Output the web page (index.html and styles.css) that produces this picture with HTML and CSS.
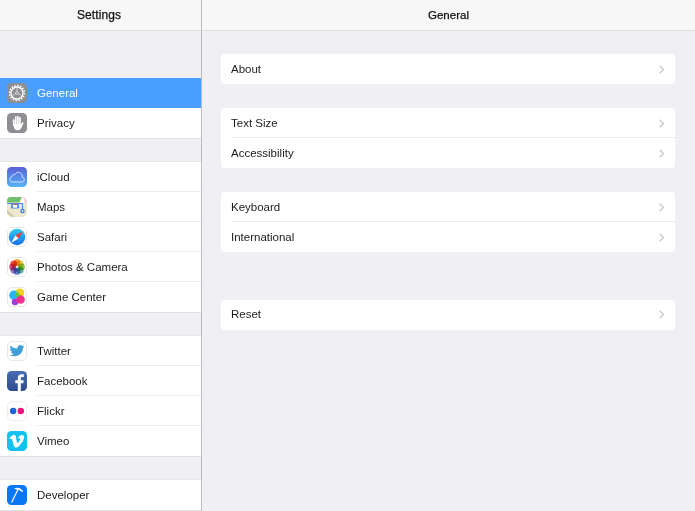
FILE: index.html
```html
<!DOCTYPE html>
<html lang="en">
<head>
<meta charset="utf-8">
<title>Settings</title>
<link rel="stylesheet" href="styles.css">
</head>
<body>
<div class="app">
  <aside class="sidebar">
    <header class="bar bar-side"><h1 class="bar-title">Settings</h1></header>
    <div class="side-list">
      <ul class="group">
        <li class="row selected">
          <svg class="icon" viewBox="0 0 20 20"><rect width="20" height="20" rx="4.5" fill="#8e8e93"/><g fill="none" stroke="#fff"><circle cx="10" cy="10" r="7.4" stroke-width="1.6" stroke-dasharray="1.5 1.4"/><circle cx="10" cy="10" r="6" stroke-width="1.3"/><path d="M10 8.500V5M8.700 10.700l-3 1.800M11.300 10.700l3 1.800" stroke-width=".6"/><circle cx="10" cy="10" r="1.400" stroke-width=".6"/></g></svg>
          <span class="label">General</span>
        </li>
        <li class="row">
          <svg class="icon" viewBox="0 0 20 20"><rect width="20" height="20" rx="4.5" fill="#8e8e93"/><path fill="none" stroke="#fff" stroke-width="1.700" stroke-linecap="round" d="M6.700 7v5M8.800 4v7M10.900 3.500V11M13 4.800V11.500"/><path fill="#fff" d="M5.850 11h8v.5l1.300-2c.6-.8 1.700-.2 1.300.7l-1.900 4.300c-.7 1.600-1.900 2.700-3.700 2.700-2.500 0-4-1.400-4-3.800z"/></svg>
          <span class="label">Privacy</span>
        </li>
      </ul>
      <ul class="group">
        <li class="row">
          <svg class="icon" viewBox="0 0 20 20"><defs><linearGradient id="cloudbg" x1="0" y1="0" x2="0" y2="1"><stop offset="0" stop-color="#5a5fd8"/><stop offset="1" stop-color="#55b4f8"/></linearGradient></defs><rect width="20" height="20" rx="4.5" fill="url(#cloudbg)"/><path fill="none" stroke="#e4eefc" stroke-width=".9" d="M5.500 15C2.500 15 1.800 11 4.500 10 4.500 8 6.500 7.200 7.800 8 8.800 5.500 11.500 4.500 13.500 6 15 7 15.500 8.500 15 10 18 10.500 18 15 15 15z"/></svg>
          <span class="label">iCloud</span><span class="sep"></span>
        </li>
        <li class="row">
          <svg class="icon" viewBox="0 0 20 20"><rect width="20" height="20" rx="4.500" fill="#efe8cf"/><path fill="#6fc26b" d="M4 0h11L12 5.500H0V4a4 4 0 0 1 4-4z"/><path fill="#fff" d="M15 0h1a4 4 0 0 1 4 4v2h-6z"/><path fill="#f6c8d0" d="M16 0l1 .2L20 4v2h-2z"/><path fill="#cdc9a8" d="M0 13l8 7H5l-5-4z"/><path fill="none" stroke="#3d92ef" stroke-width="1.100" d="M0 6.500h15.500v8"/><rect x="4" y="6" width="8" height="5.500" rx="1" fill="#4c8ee8"/><path d="M5.500 8h5l-.7 2.800H6.200z" fill="#fff"/><path d="M5 7h6" stroke="#e8574f" stroke-width=".9"/><circle cx="15.500" cy="14" r="2.200" fill="#2a7be8"/><circle cx="15.500" cy="14" r=".9" fill="#fff"/></svg>
          <span class="label">Maps</span><span class="sep"></span>
        </li>
        <li class="row">
          <svg class="icon" viewBox="0 0 20 20"><defs><linearGradient id="safaribg" x1="0" y1="0" x2="0" y2="1"><stop offset="0" stop-color="#2ecbf5"/><stop offset="1" stop-color="#1a6fe8"/></linearGradient></defs><rect x=".5" y=".5" width="19" height="19" rx="4.500" fill="#fff" stroke="#e8e8ea"/><circle cx="10" cy="10" r="8.300" fill="url(#safaribg)"/><path fill="#f23b30" d="M15.800 4.200L8.500 8.500l3 3z"/><path fill="#fff" d="M4.200 15.800l7.300-4.300-3-3z"/></svg>
          <span class="label">Safari</span><span class="sep"></span>
        </li>
        <li class="row">
          <svg class="icon" viewBox="0 0 20 20"><rect x=".5" y=".5" width="19" height="19" rx="4.500" fill="#fff" stroke="#e8e8ea"/><circle class="petal" cx="10" cy="5.500" r="3.400" fill="#f4a53a"/><circle class="petal" cx="13.200" cy="6.800" r="3.400" fill="#e8d33f"/><circle class="petal" cx="14.500" cy="10" r="3.400" fill="#93c84d"/><circle class="petal" cx="13.200" cy="13.200" r="3.400" fill="#5cb6a8"/><circle class="petal" cx="10" cy="14.500" r="3.400" fill="#6f8fd6"/><circle class="petal" cx="6.800" cy="13.200" r="3.400" fill="#9a7fc8"/><circle class="petal" cx="5.500" cy="10" r="3.400" fill="#d95f8f"/><circle class="petal" cx="6.800" cy="6.800" r="3.400" fill="#ea5048"/></svg>
          <span class="label">Photos &amp; Camera</span><span class="sep"></span>
        </li>
        <li class="row">
          <svg class="icon" viewBox="0 0 20 20"><rect x=".5" y=".5" width="19" height="19" rx="4.500" fill="#fff" stroke="#e8e8ea"/><circle cx="12.800" cy="6" r="4.500" fill="#f6d21f"/><circle cx="6.800" cy="8.200" r="4.600" fill="#29b6f6"/><circle cx="8" cy="15" r="3.300" fill="#9a3fd8"/><circle cx="13.500" cy="12.500" r="4.300" fill="#f2318f"/><path d="M9.800 4.500l3.400 3.600-2.500 2.400-2.200-2z" fill="#5cc83c"/></svg>
          <span class="label">Game Center</span>
        </li>
      </ul>
      <ul class="group">
        <li class="row">
          <svg class="icon" viewBox="0 0 20 20"><rect x=".5" y=".5" width="19" height="19" rx="4.500" fill="#fff" stroke="#e8e8ea"/><path fill="#3f9fd8" d="M17.500 5.400c-.5.200-1 .4-1.600.5.600-.4 1-.9 1.200-1.600-.5.300-1.100.6-1.800.7a2.900 2.900 0 0 0-4.900 2.600C7.600 7.400 5 6.300 3.500 4.500c-.8 1.300-.4 3 .9 3.900-.5 0-.9-.1-1.300-.4 0 1.400 1 2.600 2.300 2.900-.4.100-.9.100-1.300 0 .4 1.200 1.400 2 2.700 2a5.800 5.800 0 0 1-4.300 1.200c4 2.600 13 1.300 13.500-7.100.5-.5 1-1 1.500-1.600z"/></svg>
          <span class="label">Twitter</span><span class="sep"></span>
        </li>
        <li class="row">
          <svg class="icon" viewBox="0 0 20 20"><defs><linearGradient id="fbbg" x1="0" y1="0" x2="0" y2="1"><stop offset="0" stop-color="#4a6db5"/><stop offset="1" stop-color="#2f4a8c"/></linearGradient></defs><rect width="20" height="20" rx="4.500" fill="url(#fbbg)"/><path fill="#fff" d="M13.800 20v-7.700h2.500l.4-3h-2.900V7.500c0-.9.300-1.500 1.500-1.500h1.500V3.300c-.3 0-1.200-.1-2.200-.1-2.300 0-3.800 1.400-3.800 3.900v2.200H8.300v3h2.500V20z"/></svg>
          <span class="label">Facebook</span><span class="sep"></span>
        </li>
        <li class="row">
          <svg class="icon" viewBox="0 0 20 20"><rect x=".5" y=".5" width="19" height="19" rx="4.500" fill="#fff" stroke="#eeeef0"/><circle cx="6.200" cy="10" r="3.200" fill="#1f62d8"/><circle cx="13.800" cy="10" r="3.200" fill="#f2107f"/></svg>
          <span class="label">Flickr</span><span class="sep"></span>
        </li>
        <li class="row">
          <svg class="icon" viewBox="0 0 20 20"><rect width="20" height="20" rx="4.500" fill="#14c0f0"/><path fill="#fff" d="M17 6.700c-.1 1.500-1.100 3.500-3 6-2 2.600-3.700 3.900-5.100 3.900-.9 0-1.600-.8-2.200-2.400L5.500 9.800c-.4-1.600-.9-2.400-1.400-2.400-.1 0-.5.200-1.200.7L2.200 7.200c.8-.7 1.500-1.400 2.300-2 1-.9 1.800-1.400 2.300-1.400 1.200-.1 1.900.7 2.200 2.400.3 1.900.5 3 .6 3.500.3 1.600.7 2.300 1.100 2.300.3 0 .8-.5 1.400-1.400.6-1 1-1.700 1-2.200.1-.8-.2-1.200-1-1.200-.4 0-.7.100-1.100.2.700-2.400 2.100-3.500 4.100-3.500 1.500.1 2.200 1 1.900 2.800z"/></svg>
          <span class="label">Vimeo</span>
        </li>
      </ul>
      <ul class="group">
        <li class="row">
          <svg class="icon" viewBox="0 0 20 20"><rect width="20" height="20" rx="4.500" fill="#0a78f5"/><path fill="none" stroke="#fff" stroke-width="1.200" stroke-linecap="round" d="M4.800 17L11 4.500"/><path fill="#fff" d="M7 3.300c2.800-1.300 6.500-.8 9.200 2.800l-1 1C13.500 5.300 12.200 4.800 10.800 5l-1.300-.4C8.800 4.200 7.800 3.900 7 3.300z"/></svg>
          <span class="label">Developer</span>
        </li>
      </ul>
    </div>
  </aside>
  <main class="detail">
    <header class="bar"><h2 class="bar-title">General</h2></header>
    <div class="detail-list">
      <ul class="card">
        <li class="item"><span class="label">About</span><svg class="chev" viewBox="0 0 6 9"><path d="M.7.7l3.800 3.800L.7 8.300"/></svg></li>
      </ul>
      <ul class="card">
        <li class="item"><span class="label">Text Size</span><svg class="chev" viewBox="0 0 6 9"><path d="M.7.7l3.800 3.800L.7 8.300"/></svg><span class="sep"></span></li>
        <li class="item"><span class="label">Accessibility</span><svg class="chev" viewBox="0 0 6 9"><path d="M.7.7l3.800 3.800L.7 8.300"/></svg></li>
      </ul>
      <ul class="card">
        <li class="item"><span class="label">Keyboard</span><svg class="chev" viewBox="0 0 6 9"><path d="M.7.7l3.800 3.800L.7 8.300"/></svg><span class="sep"></span></li>
        <li class="item"><span class="label">International</span><svg class="chev" viewBox="0 0 6 9"><path d="M.7.7l3.800 3.800L.7 8.300"/></svg></li>
      </ul>
      <ul class="card card-reset">
        <li class="item"><span class="label">Reset</span><svg class="chev" viewBox="0 0 6 9"><path d="M.7.7l3.800 3.800L.7 8.300"/></svg></li>
      </ul>
    </div>
  </main>
</div>
</body>
</html>
```
FILE: styles.css
```css
* { box-sizing: border-box; }
html, body { margin: 0; height: 100%; overflow: hidden; }
body {
  background: #efeff4;
  color: #1c1c1e;
  font-family: "Liberation Sans", Arial, sans-serif;
  font-size: 11.5px;
}
ul { list-style: none; margin: 0; padding: 0; }
.app { display: flex; width: 695px; height: 511px; }
.sidebar { width: 202px; flex: none; border-right: 1px solid #bcbcc0; }
.detail { flex: 1; }
.bar {
  height: 31px;
  background: #f7f7f7;
  border-bottom: 1px solid #e0e0e2;
  display: flex;
  align-items: center;
  justify-content: center;
}
.bar-title { margin: 0; font-size: 11.5px; font-weight: 400; color: #111; -webkit-text-stroke: .25px #111; }
.bar-side .bar-title { font-size: 12px; letter-spacing: .1px; margin-right: 3px; }
.side-list { padding-top: 47px; display: flex; flex-direction: column; gap: 24px; }
.group { background: #fff; box-shadow: 0 1px 0 #e2e2e5, 0 -1px 0 #e9e9ec; }
.group:first-child { box-shadow: 0 1px 0 #e2e2e5; }
.row {
  position: relative;
  height: 30px;
  display: flex;
  align-items: center;
  gap: 10px;
  padding-left: 7px;
}
.row.selected { background: #4a9eff; color: #fff; }
.icon { width: 20px; height: 20px; flex: none; }
.petal { mix-blend-mode: multiply; }
.sep {
  position: absolute;
  left: 37px;
  right: 0;
  bottom: 0;
  height: 1px;
  background: #ebebee;
}
.detail-list { padding: 23px 20px 0 19px; display: flex; flex-direction: column; gap: 24px; }
.card { background: #fff; border-radius: 4px; }
.card-reset { margin-top: 24px; }
.card-reset .item { padding-bottom: 2px; }
.item {
  position: relative;
  height: 30px;
  display: flex;
  align-items: center;
  justify-content: space-between;
  padding: 0 10px;
}
.item .sep { left: 10px; }
.chev { width: 6px; height: 9px; fill: none; stroke: #c7c7cc; stroke-width: 1.300; }
```
